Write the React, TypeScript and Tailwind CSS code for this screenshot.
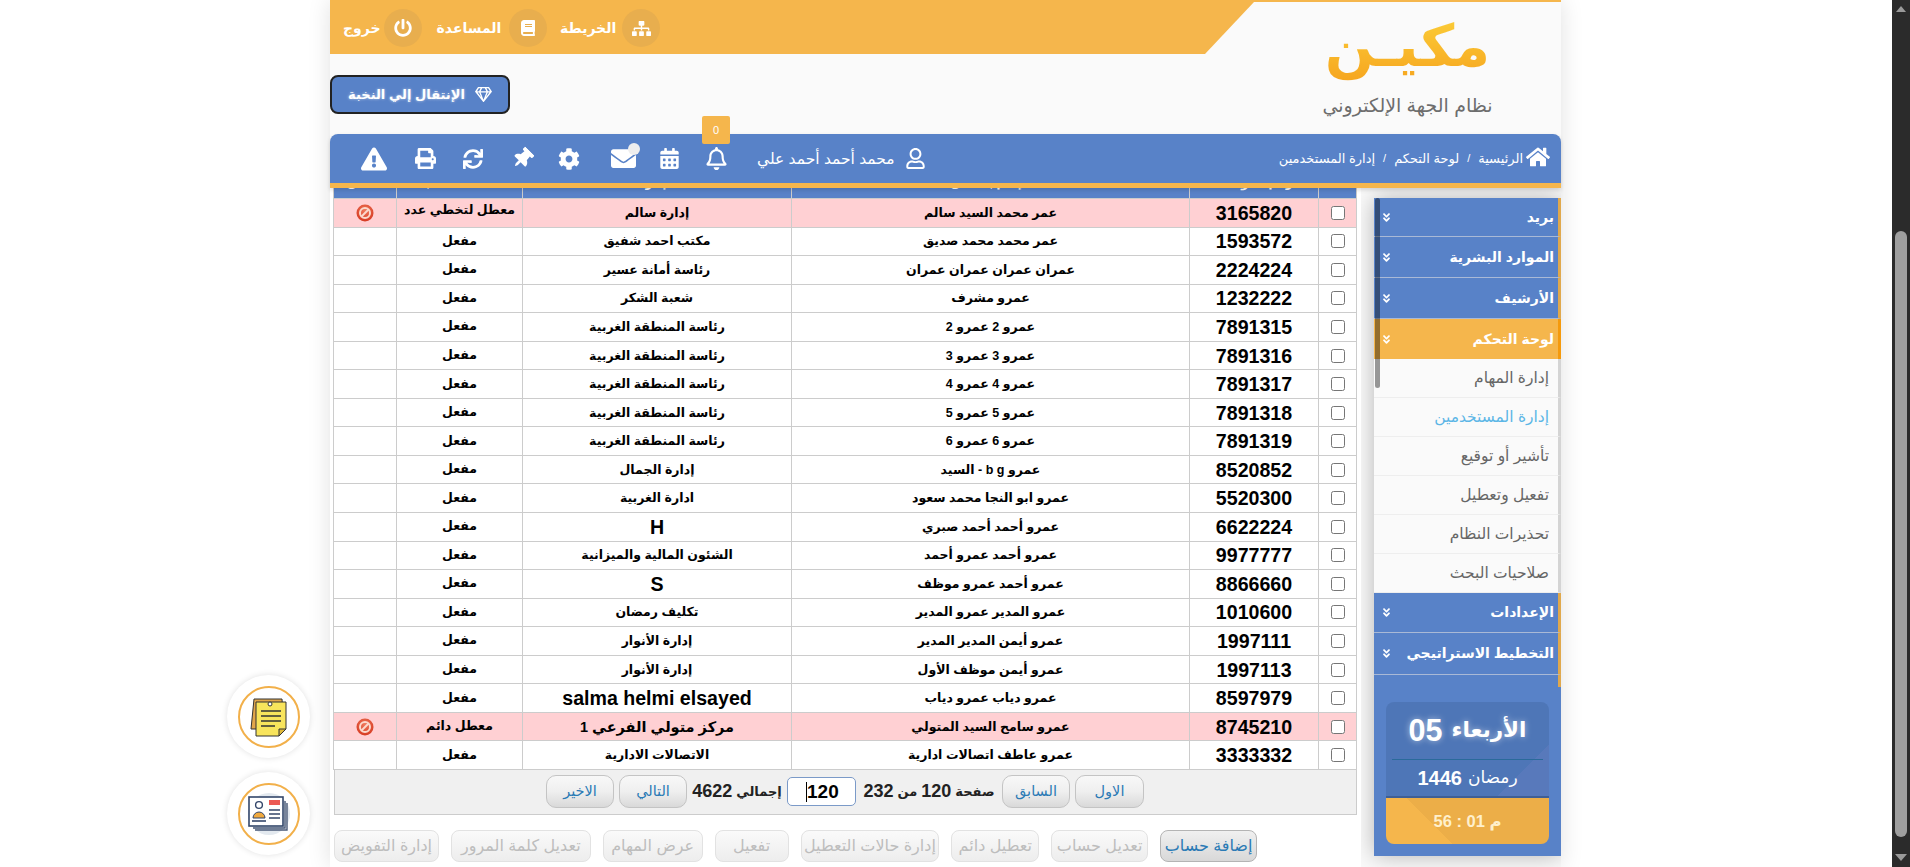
import type { ReactNode } from "react";
import {
  FaAngleDoubleDown,
  FaBook,
  FaCalendarAlt,
  FaCog,
  FaEnvelope,
  FaExclamationTriangle,
  FaHome,
  FaPowerOff,
  FaPrint,
  FaRegBell,
  FaRegGem,
  FaRegUser,
  FaSitemap,
  FaSync,
  FaThumbtack,
} from "react-icons/fa";

type Row = {
  id: string;
  name: string;
  dept: string;
  status?: string;
  deptSize?: string;
  off?: boolean;
  second?: string;
};

const rows: Row[] = [
  { id: "3165820", name: "عمر محمد السيد سالم", dept: "إدارة سالم", status: "معطل لتخطي عدد", second: "مرات الدخول", off: true },
  { id: "1593572", name: "عمر محمد محمد صديق", dept: "مكتب احمد شفيق" },
  { id: "2224224", name: "عمران عمران عمران عمران", dept: "رئاسة أمانة عسير" },
  { id: "1232222", name: "عمرو مشرف", dept: "شعبة الشكر" },
  { id: "7891315", name: "عمرو 2 عمرو 2", dept: "رئاسة المنطقة الغربية" },
  { id: "7891316", name: "عمرو 3 عمرو 3", dept: "رئاسة المنطقة الغربية" },
  { id: "7891317", name: "عمرو 4 عمرو 4", dept: "رئاسة المنطقة الغربية" },
  { id: "7891318", name: "عمرو 5 عمرو 5", dept: "رئاسة المنطقة الغربية" },
  { id: "7891319", name: "عمرو 6 عمرو 6", dept: "رئاسة المنطقة الغربية" },
  { id: "8520852", name: "عمرو b g - السيد", dept: "إدارة الجمال" },
  { id: "5520300", name: "عمرو ابو النجا محمد سعود", dept: "ادارة الغربية" },
  { id: "6622224", name: "عمرو أحمد أحمد صبري", dept: "H", deptSize: "text-[19.6px]" },
  { id: "9977777", name: "عمرو أحمد عمرو أحمد", dept: "الشئون المالية والميزانية" },
  { id: "8866660", name: "عمرو أحمد عمرو موظف", dept: "S", deptSize: "text-[19.6px]" },
  { id: "1010600", name: "عمرو المدير عمرو المدير", dept: "تكليف رمضان" },
  { id: "1997111", name: "عمرو أيمن المدير المدير", dept: "إدارة الأنوار" },
  { id: "1997113", name: "عمرو أيمن موظف الأول", dept: "إدارة الأنوار" },
  { id: "8597979", name: "عمرو دياب عمرو دياب", dept: "salma helmi elsayed", deptSize: "text-[19.6px]" },
  { id: "8745210", name: "عمرو سامح السيد المتولي", dept: "مركز متولي الفرعي 1", status: "معطل دائم", deptSize: "text-[14.5px]", off: true },
  { id: "3333332", name: "عمرو عاطف اتصالات ادارية", dept: "الاتصالات الادارية" },
];

const subItems = ["إدارة المهام", "إدارة المستخدمين", "تأشير أو توقيع", "تفعيل وتعطيل", "تحذيرات النظام", "صلاحيات البحث"];

function BanIcon() {
  return (
    <svg width="18" height="18" viewBox="0 0 18 18" className="mx-auto block">
      <defs>
        <radialGradient id="ban" cx="50%" cy="35%" r="70%">
          <stop offset="0%" stopColor="#ef7a5c" />
          <stop offset="100%" stopColor="#d4341c" />
        </radialGradient>
      </defs>
      <circle cx="9" cy="9" r="8.5" fill="url(#ban)" />
      <circle cx="9" cy="9" r="5" fill="none" stroke="#fbd9cc" strokeWidth="2" />
      <line x1="5.5" y1="12.5" x2="12.5" y2="5.5" stroke="#fbd9cc" strokeWidth="2" />
    </svg>
  );
}

function NotesIcon() {
  return (
    <svg width="42" height="42" viewBox="0 0 42 42">
      <path d="M6 3h28l2 30H3z" fill="#e2a64a" stroke="#333" strokeWidth="1" />
      <path d="M8 6h30v27l-7 7H8z" fill="#f8e45c" stroke="#333" strokeWidth="1" />
      <path d="M31 40v-7h7z" fill="#e0b93a" stroke="#333" strokeWidth="1" />
      <circle cx="22" cy="8" r="2" fill="#fff" stroke="#333" strokeWidth="1" />
      <path d="M13 15h20M13 20h20M13 25h20M13 30h14" stroke="#333" strokeWidth="1.6" />
    </svg>
  );
}

function CardsIcon() {
  return (
    <svg width="46" height="46" viewBox="0 0 46 46">
      <circle cx="23" cy="23" r="21" fill="#e3e9ef" />
      <path d="M9 39h32V12" fill="none" stroke="#4a5a78" strokeWidth="1.4" />
      <path d="M7 37h32V10" fill="none" stroke="#4a5a78" strokeWidth="1.4" />
      <rect x="3" y="6" width="34" height="29" fill="#fff" stroke="#33466a" strokeWidth="1.6" />
      <circle cx="13" cy="14" r="3.4" fill="none" stroke="#33466a" strokeWidth="1.4" />
      <path d="M7 27a6 6 0 0 1 12 0z" fill="#f0a93e" stroke="#33466a" strokeWidth="1" />
      <path d="M6 30h14" stroke="#33466a" strokeWidth="1.6" />
      <rect x="23" y="9" width="11" height="5" fill="#ec5a55" />
      <path d="M23 19h11M23 23h11M23 27h11" stroke="#33466a" strokeWidth="1.4" />
    </svg>
  );
}

function NavLink({ icon, label, w }: { icon: ReactNode; label: string; w: string }) {
  return (
    <div className="flex items-center gap-[6px]">
      <span className={`${w} whitespace-nowrap text-center font-bold text-[14px] text-white`}>{label}</span>
      <span className="flex h-[38px] w-[38px] items-center justify-center rounded-full bg-[#e8ae4e] text-white">{icon}</span>
    </div>
  );
}

function FloatCircle({ children }: { children: ReactNode }) {
  return (
    <div className="flex h-[83px] w-[83px] items-center justify-center rounded-full bg-white shadow-[0_0_6px_rgba(0,0,0,0.12)]">
      <div className="flex h-[62px] w-[62px] items-center justify-center rounded-full border-2 border-[#f2b04a]">{children}</div>
    </div>
  );
}

function PageButton({ label, w }: { label: string; w: string }) {
  return (
    <button className={`${w} h-[33px] rounded-[10px] border border-[#c4c4c4] bg-gradient-to-b from-[#f8f8f8] via-[#efefef] to-[#d9d9d9] text-[14.5px] font-normal text-[#2a7ab5]`}>
      {label}
    </button>
  );
}

function ActionButton({ label, w, active }: { label: string; w: string; active?: boolean }) {
  return (
    <button
      className={`${w} h-[32px] whitespace-nowrap rounded-[8px] border text-[16px] bg-gradient-to-b ${
        active
          ? "border-[#b4b4b4] from-[#f0f0f0] to-[#d8d8d8] text-[#2a7ab5]"
          : "border-[#e2e2e2] from-[#fafafa] to-[#ededed] text-[#bdbdbd]"
      }`}
    >
      {label}
    </button>
  );
}

function Sidebar() {
  const head = "flex items-center justify-between border-b border-[#a9b9d6] border-r-[3px] border-r-[#e0a84c] pr-[4px] pl-[7px] font-bold text-[14px] text-white";
  return (
    <aside className="relative mt-[10px] h-[658px] w-[187px] shrink-0 bg-[#5882c8] shadow-[0_0_22px_rgba(0,0,0,0.28)]">
      <div className={`${head} h-[39px]`}>
        <span>بريد</span>
        <FaAngleDoubleDown size={11} />
      </div>
      <div className={`${head} h-[41px]`}>
        <span>الموارد البشرية</span>
        <FaAngleDoubleDown size={11} />
      </div>
      <div className={`${head} h-[41px]`}>
        <span>الأرشيف</span>
        <FaAngleDoubleDown size={11} />
      </div>
      <div className="flex h-[40px] items-center justify-between border-r-[3px] border-r-[#f59a0c] bg-[#f5b64c] pr-[4px] pl-[7px] font-bold text-[14px] text-white">
        <span>لوحة التحكم</span>
        <FaAngleDoubleDown size={11} />
      </div>
      {subItems.map((item, i) => (
        <div
          key={item}
          className={`flex h-[39px] items-center border-b border-[#eeeeee] border-r-[3px] border-r-[#d4d4d4] bg-[#fafafa] pr-[9px] text-[15.5px] ${
            i === 1 ? "text-[#5cb6e6]" : "text-[#666666]"
          }`}
        >
          {item}
        </div>
      ))}
      <div className={`${head} h-[40px]`}>
        <span>الإعدادات</span>
        <FaAngleDoubleDown size={11} />
      </div>
      <div className={`${head} h-[42px]`}>
        <span>التخطيط الاستراتيجي</span>
        <FaAngleDoubleDown size={11} />
      </div>
      <div className="h-[12px] border-r-[3px] border-r-[#e0a84c]" />

      <div className="mx-[12px] mt-[15px] overflow-hidden rounded-[8px] text-center text-white">
        <div className="h-[96px] border-b-2 border-[#3f5f95] bg-[linear-gradient(135deg,#4e76b7_0_80%,#5879bb_80%)] px-[6px]">
          <div className="flex h-[58px] items-center justify-center gap-[9px] border-b border-[#2a6a9a] font-bold [text-shadow:0_0_6px_rgba(255,255,255,0.55)]">
            <span className="text-[21.5px]">الأربعاء</span>
            <span className="text-[30.5px]">05</span>
          </div>
          <div className="flex h-[36px] items-center justify-center gap-[6px]">
            <span className="text-[17px]">رمضان</span>
            <span className="font-bold text-[20px]">1446</span>
          </div>
        </div>
        <div className="flex h-[46px] items-center justify-center bg-[linear-gradient(225deg,#ecae48_0_68%,#f5b64c_68%)] text-[#fff0cc]">
          <span className="font-bold text-[16.5px]" dir="ltr">م 01 : 56</span>
        </div>
      </div>

      {/* inner scrollbar */}
      <div className="absolute right-[181px] top-0 h-[190px] w-[5px] rounded-[3px] bg-[rgba(0,0,0,0.4)]" />
    </aside>
  );
}

function Users() {
  return (
    <table className="w-[1023px] table-fixed border-collapse text-center">
      <colgroup>
        <col className="w-[38px]" />
        <col className="w-[129px]" />
        <col className="w-[398px]" />
        <col className="w-[269px]" />
        <col className="w-[126px]" />
        <col className="w-[63px]" />
      </colgroup>
      <thead>
        <tr className="h-[10px] bg-[#5882c8] text-white">
          {["", "رقم الموظف", "الإسم بالكامل", "الإدارة", "حالة الحساب", "معطل"].map((h, i) => (
            <th key={i} className="h-[10px] border-x border-[#cccccc] p-0 font-bold text-[12px]">
              <div className="flex h-[10px] items-end justify-center overflow-hidden">
                <span className="whitespace-nowrap pb-[8px] leading-[14px]">{h}</span>
              </div>
            </th>
          ))}
        </tr>
      </thead>
      <tbody>
        {rows.map((r) => (
          <tr key={r.id} className={`${r.off ? "bg-[#ffd0d3]" : "bg-white"} h-[28.55px]`}>
            <td className="border border-[#cccccc] p-0">
              <input type="checkbox" className="mx-auto block h-[14px] w-[14px]" />
            </td>
            <td className="border border-[#cccccc] p-0 font-bold text-[19.6px] leading-[24px] text-black">{r.id}</td>
            <td className="border border-[#cccccc] p-0 font-bold text-[12.5px] leading-[20px] text-black">{r.name}</td>
            <td className={`border border-[#cccccc] p-0 font-bold leading-[24px] text-black ${r.deptSize ?? "text-[12.5px]"}`}>{r.dept}</td>
            <td className="border border-[#cccccc] p-0 font-bold text-[12.5px] text-black">
              <div className={`h-[27px] overflow-hidden ${r.second ? "leading-[23px]" : "leading-[27px]"}`}>
                {r.status ?? "مفعل"}
                {r.second && <div>{r.second}</div>}
              </div>
            </td>
            <td className="border border-[#cccccc] p-0">{r.off && <BanIcon />}</td>
          </tr>
        ))}
      </tbody>
    </table>
  );
}

export default function App() {
  return (
    <div className="flex h-[867px] overflow-hidden bg-white font-['Liberation_Sans','DejaVu_Sans',sans-serif]">
      <div className="relative flex-1 overflow-hidden">
        {/* floating shortcuts */}
        <div className="absolute left-[227px] top-[675px] flex flex-col gap-[14px]">
          <FloatCircle><NotesIcon /></FloatCircle>
          <FloatCircle><CardsIcon /></FloatCircle>
        </div>

        <div dir="rtl" className="ml-[330px] flex h-[867px] w-[1231px] flex-col bg-[#fafafa] shadow-[0_0_22px_rgba(0,0,0,0.12)]">
          {/* top */}
          <div className="flex h-[134px] border-t-2 border-[#f5b64c]">
            <div className="flex w-[307px] shrink-0 flex-col items-center pt-[8px]">
              <div className="bg-gradient-to-b from-[#fbd13a] to-[#f6a51e] bg-clip-text text-[58px] font-bold leading-[72px] text-transparent">مكيـن</div>
              <div className="mt-[10px] text-[19px] leading-[28px] text-[#6d6d6d]">نظام الجهة الإلكتروني</div>
            </div>
            <div className="flex-1">
              <div dir="ltr" className="flex h-[52px] items-center gap-[13px] bg-[#f5b64c] pl-[13px] [clip-path:polygon(0_0,100%_0,calc(100%-49px)_100%,0_100%)]">
                <NavLink icon={<FaPowerOff size={18} />} label="خروج" w="w-[35px]" />
                <NavLink icon={<FaBook size={16} />} label="المساعدة" w="w-[68px]" />
                <NavLink icon={<FaSitemap size={19} />} label="الخريطة" w="w-[56px]" />
              </div>
              <div dir="ltr" className="mt-[21px]">
                <button className="flex h-[39px] w-[180px] items-center justify-center gap-[10px] rounded-[8px] border-2 border-[#222222] bg-[#5882c8] text-[13px] font-bold text-white [text-shadow:0_0_3px_rgba(255,255,255,0.6)]">
                  <span>الإنتقال إلي النخبة</span>
                  <FaRegGem size={17} />
                </button>
              </div>
            </div>
          </div>

          {/* blue bar */}
          <div className="relative z-10 flex h-[54px] shrink-0 items-center justify-between rounded-t-[8px] border-b-[5px] border-[#f5b64c] bg-[#5882c8] pr-[11px] pl-[31px] text-white shadow-[0_2px_4px_rgba(0,0,0,0.15)]">
            <div className="flex items-center gap-[8px] text-[13px]">
              <FaHome size={24} className="mb-[4px] ml-[-5px]" />
              <span>الرئيسية</span>
              <span className="text-[11px]">/</span>
              <span>لوحة التحكم</span>
              <span className="text-[11px]">/</span>
              <span>إدارة المستخدمين</span>
            </div>
            <div className="flex items-center">
              <FaRegUser size={21} className="ml-[10px]" />
              <span className="ml-[29px] whitespace-nowrap text-[15.5px]">محمد أحمد أحمد علي</span>
              <div className="relative ml-[25px]">
                <FaRegBell size={23} />
                <span className="absolute -top-[31px] -left-[3px] flex h-[28px] w-[28px] items-center justify-center rounded-[2px] bg-[#f5b64c] text-[11px]">0</span>
              </div>
              <FaCalendarAlt size={21} className="ml-[23px]" />
              <div className="relative ml-[31px]">
                <FaEnvelope size={25} />
                <span className="absolute -top-[3px] -right-[4px] h-[12px] w-[12px] rounded-full bg-[#eeeeee]" />
              </div>
              <FaCog size={22} className="ml-[25px]" />
              <FaThumbtack size={21} className="ml-[29px] rotate-45" />
              <FaSync size={20} className="ml-[27px]" />
              <FaPrint size={21} className="ml-[28px]" />
              <FaExclamationTriangle size={26} />
            </div>
          </div>

          {/* body */}
          <div className="flex flex-1 gap-[13px] overflow-hidden">
            <Sidebar />
            <div className="relative z-[1] flex w-[1031px] flex-col bg-white pl-[4px] pr-[4px]">
              <Users />
              <div className="flex h-[45px] w-[1023px] shrink-0 items-center gap-[5px] border border-t-0 border-[#cccccc] bg-[#f0f0f0] pr-[212px] font-bold text-[18px] text-[#222222]">
                <PageButton label="الاول" w="w-[69px]" />
                <PageButton label="السابق" w="w-[68px]" />
                <span className="flex w-[136px] items-center justify-center gap-[4px] whitespace-nowrap">
                  <span className="text-[13px]">صفحة</span>
                  <span>120</span>
                  <span className="text-[13px]">من</span>
                  <span>232</span>
                </span>
                <div dir="ltr" className="flex h-[29px] w-[69px] items-center rounded-[5px] border border-[#7b9ac8] bg-white pl-[18px] text-[19px] text-black">
                  <span className="border-l border-black leading-[20px]">120</span>
                </div>
                <span className="flex w-[90px] items-center justify-center gap-[4px] whitespace-nowrap">
                  <span className="text-[13px]">إجمالي</span>
                  <span>4622</span>
                </span>
                <PageButton label="التالي" w="w-[68px]" />
                <PageButton label="الاخير" w="w-[68px]" />
              </div>
              <div className="mt-[15px] flex gap-[12px] pr-[100px]">
                <ActionButton label="إضافة حساب" w="w-[97px]" active />
                <ActionButton label="تعديل حساب" w="w-[97px]" />
                <ActionButton label="تعطيل دائم" w="w-[88px]" />
                <ActionButton label="إدارة حالات التعطيل" w="w-[139px]" />
                <ActionButton label="تفعيل" w="w-[74px]" />
                <ActionButton label="عرض المهام" w="w-[100px]" />
                <ActionButton label="تعديل كلمة المرور" w="w-[140px]" />
                <ActionButton label="إدارة التفويض" w="w-[105px]" />
              </div>
            </div>
          </div>
        </div>
      </div>

      {/* window scrollbar */}
      <div className="flex w-[18px] shrink-0 flex-col items-center bg-[#2b2b2b]">
        <div className="flex h-[17px] w-full items-center justify-center">
          <div className="h-0 w-0 border-x-[5px] border-b-[6px] border-x-transparent border-b-[#9a9a9a]" />
        </div>
        <div className="mt-[214px] h-[606px] w-[12px] rounded-[6px] bg-[#9f9f9f]" />
        <div className="mt-auto flex h-[20px] w-full items-center justify-center">
          <div className="h-0 w-0 border-x-[6px] border-t-[7px] border-x-transparent border-t-[#9a9a9a]" />
        </div>
      </div>
    </div>
  );
}
